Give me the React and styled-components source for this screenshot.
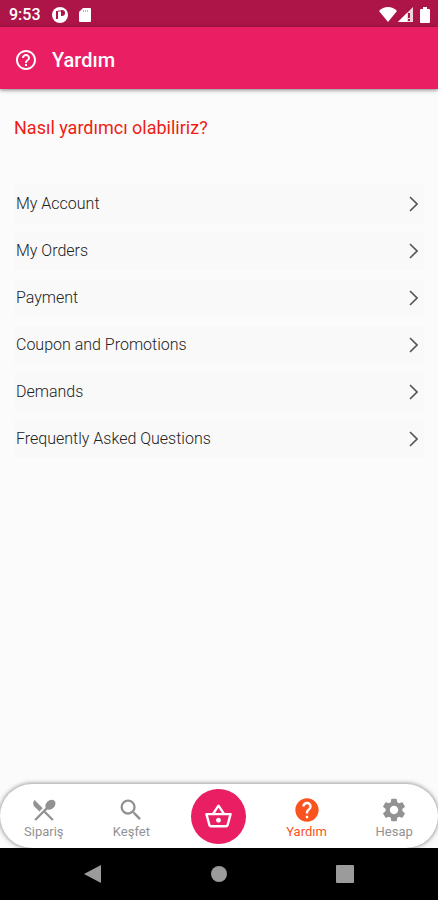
import React from "react";
import styled, { createGlobalStyle } from "styled-components";
import {
  MdHelp,
  MdHelpOutline,
  MdOutlineShoppingBasket,
  MdRestaurantMenu,
  MdSearch,
  MdSettings,
} from "react-icons/md";

const GlobalStyle = createGlobalStyle`
  * { box-sizing: border-box; }
  body {
    margin: 0;
    background: #fbfbfb;
    font-family: Roboto, "Liberation Sans", sans-serif;
  }
  button { font-family: inherit; border: 0; padding: 0; background: none; cursor: pointer; }
`;

const Screen = styled.div`
  min-height: 100vh;
  display: flex;
  flex-direction: column;
  background: #fbfbfb;
`;

const StatusBar = styled.div`
  height: 27px;
  flex: none;
  display: flex;
  align-items: center;
  padding: 2px 8px 0 9px;
  background: #ad1448;
  color: #fff;
`;

const Clock = styled.time`
  font-size: 16px;
  line-height: 20px;
  font-weight: 500;
  margin-right: 11px;
`;

const StatusGroup = styled.div`
  display: flex;
  align-items: center;
  gap: ${(p) => p.$gap}px;
  margin-left: ${(p) => (p.$end ? "auto" : "0")};
  svg { display: block; }
`;

const AppBar = styled.header`
  height: 62px;
  flex: none;
  display: flex;
  align-items: center;
  gap: 14px;
  padding: 4px 14px 0;
  background: #e91e63;
  color: #fff;
  box-shadow: 0 1px 4px rgba(0, 0, 0, 0.5);
`;

const Title = styled.h1`
  margin: 0;
  font-size: 20px;
  line-height: 28px;
  font-weight: 500;
`;

const Content = styled.main`
  flex: 1;
  padding: 27px 14px 24px;
`;

const Question = styled.h2`
  margin: 0;
  font-size: 18px;
  line-height: 24px;
  font-weight: 400;
  color: #f01c14;
`;

const Topics = styled.ul`
  list-style: none;
  margin: 45px 0 0;
  padding: 0;
  display: grid;
  gap: 9px;
`;

const Topic = styled.button`
  width: 100%;
  height: 38px;
  display: flex;
  align-items: center;
  justify-content: space-between;
  padding: 0 6px 0 2px;
  background: #f9f9f9;
  color: #222;
  font-size: 16px;
  line-height: 20px;
  font-weight: 300;
  text-align: left;
`;

const TabBar = styled.nav`
  height: 64px;
  flex: none;
  display: grid;
  grid-template-columns: repeat(5, 1fr);
  align-items: center;
  border-radius: 32px;
  background: #fff;
  box-shadow: 0 0 5px rgba(0, 0, 0, 0.55);
`;

const Tab = styled.button`
  display: flex;
  flex-direction: column;
  align-items: center;
  padding-top: 3px;
  color: ${(p) => (p.$active ? "#fb5320" : "#929292")};
  font-size: 13px;
  line-height: 16px;
`;

const BasketButton = styled.button`
  justify-self: center;
  width: 55px;
  height: 55px;
  display: grid;
  place-items: center;
  border-radius: 50%;
  background: #e91e63;
  color: #fff;
`;

const SystemBar = styled.div`
  height: 52px;
  flex: none;
  display: flex;
  align-items: center;
  justify-content: space-around;
  padding: 0 30px;
  background: #000;
`;

const SystemButton = styled.button`
  width: 32px;
  height: 32px;
  display: grid;
  place-items: center;
  color: #9b9b9b;
`;

const topics = [
  "My Account",
  "My Orders",
  "Payment",
  "Coupon and Promotions",
  "Demands",
  "Frequently Asked Questions",
];

function AppBadge() {
  return (
    <svg width="16" height="16" viewBox="0 0 16 16" aria-hidden="true">
      <circle cx="8" cy="8" r="8" fill="#fff" />
      <path d="M4 4h2v8H4z" fill="#ad1448" />
      <path d="M6 3h3v2H6z" fill="#d98aa6" />
      <path d="M9 3h1a3 3 0 0 1 0 6H9z" fill="#ad1448" />
    </svg>
  );
}

function CardGlyph() {
  return (
    <svg width="12" height="14" viewBox="0 0 12 14" aria-hidden="true">
      <path d="M4 0h7a1 1 0 0 1 1 1v12a1 1 0 0 1-1 1H1a1 1 0 0 1-1-1V4z" fill="#fff" />
      <path d="M4 2h1v2H4zM6 2h1v2H6zM8 2h1v2H8z" fill="#e3a5ba" />
    </svg>
  );
}

function WifiGlyph() {
  return (
    <svg width="18" height="15" viewBox="0 0 18 15" aria-hidden="true">
      <path d="M9 15 0 4C2.500 1.500 5.500 0 9 0s6.500 1.500 9 4z" fill="#fff" />
    </svg>
  );
}

function SignalGlyph() {
  return (
    <svg width="16" height="15" viewBox="0 0 16 15" aria-hidden="true">
      <path d="M0 15 15 0v15z" fill="#f3d3de" />
      <path d="M0 15 9 6v9z" fill="#fff" />
      <path d="M10 6h2v5h-2zM10 12h2v2h-2z" fill="#ad1448" />
    </svg>
  );
}

function BatteryGlyph() {
  return (
    <svg width="10" height="16" viewBox="0 0 10 16" aria-hidden="true">
      <path d="M3 0h4v2h2a1 1 0 0 1 1 1v12a1 1 0 0 1-1 1H1a1 1 0 0 1-1-1V3a1 1 0 0 1 1-1h2z" fill="#fff" />
    </svg>
  );
}

function Chevron() {
  return (
    <svg width="9" height="16" viewBox="0 0 9 16" aria-hidden="true">
      <path d="M1 1l7 7-7 7" fill="none" stroke="#555" strokeWidth="1.600" />
    </svg>
  );
}

export default function App() {
  return (
    <Screen>
      <GlobalStyle />
      <StatusBar>
        <Clock>9:53</Clock>
        <StatusGroup $gap={11}>
          <AppBadge />
          <CardGlyph />
        </StatusGroup>
        <StatusGroup $gap={1} $end>
          <WifiGlyph />
          <StatusGroup $gap={6}>
            <SignalGlyph />
            <BatteryGlyph />
          </StatusGroup>
        </StatusGroup>
      </StatusBar>
      <AppBar>
        <MdHelpOutline size={24} aria-hidden="true" />
        <Title>Yardım</Title>
      </AppBar>
      <Content>
        <Question>Nasıl yardımcı olabiliriz?</Question>
        <Topics>
          {topics.map((topic) => (
            <li key={topic}>
              <Topic type="button">
                {topic}
                <Chevron />
              </Topic>
            </li>
          ))}
        </Topics>
      </Content>
      <TabBar aria-label="Menü">
        <Tab type="button">
          <MdRestaurantMenu size={28} aria-hidden="true" />
          Sipariş
        </Tab>
        <Tab type="button">
          <MdSearch size={28} aria-hidden="true" />
          Keşfet
        </Tab>
        <BasketButton type="button" aria-label="Sepet">
          <MdOutlineShoppingBasket size={29} aria-hidden="true" />
        </BasketButton>
        <Tab type="button" $active aria-current="page">
          <MdHelp size={28} aria-hidden="true" />
          Yardım
        </Tab>
        <Tab type="button">
          <MdSettings size={28} aria-hidden="true" />
          Hesap
        </Tab>
      </TabBar>
      <SystemBar>
        <SystemButton type="button" aria-label="Geri">
          <svg width="18" height="18" viewBox="0 0 18 18" aria-hidden="true">
            <path d="M0 9 17 0v18z" fill="currentColor" />
          </svg>
        </SystemButton>
        <SystemButton type="button" aria-label="Ana ekran">
          <svg width="16" height="16" viewBox="0 0 16 16" aria-hidden="true">
            <circle cx="8" cy="8" r="8" fill="currentColor" />
          </svg>
        </SystemButton>
        <SystemButton type="button" aria-label="Son uygulamalar">
          <svg width="18" height="18" viewBox="0 0 18 18" aria-hidden="true">
            <rect width="18" height="18" rx="1" fill="currentColor" />
          </svg>
        </SystemButton>
      </SystemBar>
    </Screen>
  );
}
